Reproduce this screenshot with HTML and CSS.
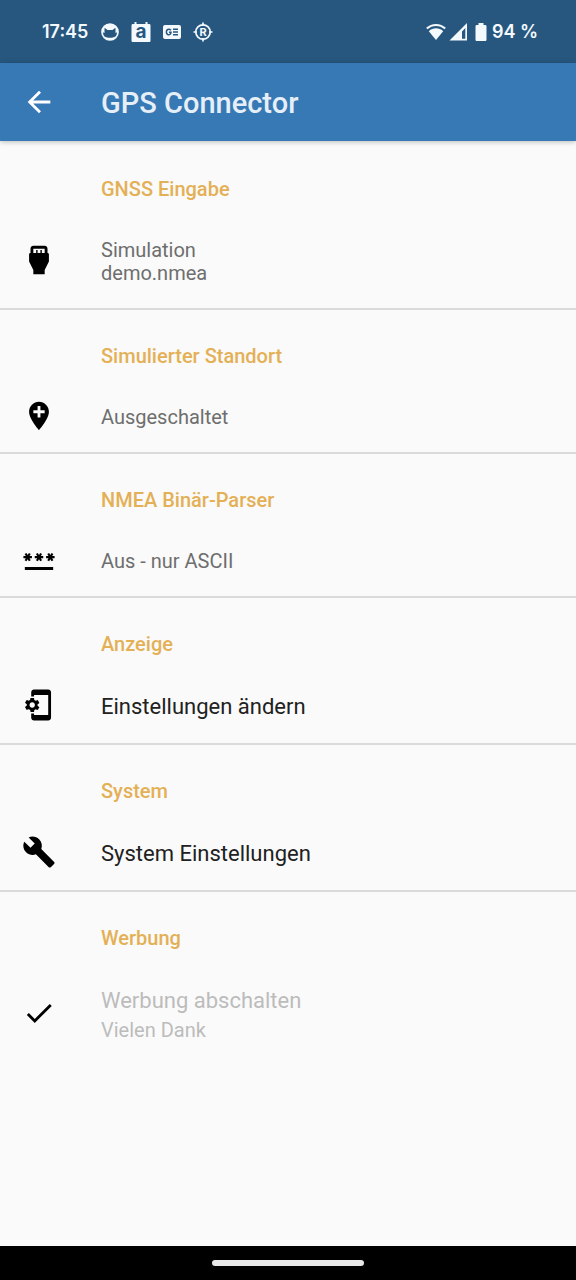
FILE: index.html
```html
<!DOCTYPE html>
<html lang="de">
<head>
    <meta charset="UTF-8">
    <meta name="viewport" content="width=device-width, initial-scale=1.0">
    <title>GPS Connector</title>
    <link rel="stylesheet" href="styles.css">
</head>
<body>
    <div class="status-bar">
        <div class="status-group notifications">
            <span class="clock">17:45</span>
            <svg class="status-icon" viewBox="0 0 20 20" aria-hidden="true">
                <circle cx="10" cy="10" r="8" fill="none" stroke="currentColor" stroke-width="1.7"/>
                <path fill="currentColor" d="M2.200 10C2.200 5 5.500 2 10 2s7.800 3 7.800 8l-2.300 1V5.800l-3 2.200h-5l-3-2.200V11z"/>
                <path fill="currentColor" d="M4.500 14.500c3 1.800 8 1.800 11 0L13 18H7z"/>
            </svg>
            <svg class="status-icon" viewBox="0 0 20 20" aria-hidden="true">
                <path fill="currentColor" d="M3.500 0h2v2h9V0h2v2H18c1 0 1.500.5 1.500 1.500v15c0 1-.5 1.500-1.500 1.500H2c-1 0-1.500-.5-1.500-1.500v-15C.5 2.500 1 2 2 2h1.500z"/>
                <text class="badge-letter" x="10" y="16">a</text>
            </svg>
            <svg class="status-icon" viewBox="0 0 20 20" aria-hidden="true">
                <rect x="1" y="3" width="18" height="14" rx="2" fill="currentColor"/>
                <path class="cutout" d="M9 8.300C8 7.200 6.800 6.900 5.700 7.500c-1.800 1-1.800 4 0 5C7.300 13.300 9 12.300 9 10.300H7M11 7.300h5M11 10h5M11 12.700h5"/>
            </svg>
            <svg class="status-icon" viewBox="0 0 20 20" aria-hidden="true">
                <circle cx="10" cy="10" r="7.200" fill="none" stroke="currentColor" stroke-width="1.700"/>
                <path d="M10 .5V4M10 16v3.500M.5 10H4M16 10h3.500" stroke="currentColor" stroke-width="1.700"/>
                <text class="ring-letter" x="10" y="14">R</text>
            </svg>
        </div>
        <div class="status-group">
            <svg class="status-icon" viewBox="0 0 20 20" aria-hidden="true">
                <path d="M.8 6.500C6 1.700 14 1.700 19.200 6.500" fill="none" stroke="currentColor" stroke-width="2"/>
                <path fill="currentColor" d="M2.800 9.200c4.200-3.800 10.200-3.800 14.400 0L10 18z"/>
            </svg>
            <svg class="status-icon" viewBox="0 0 20 20" aria-hidden="true">
                <path fill="currentColor" fill-rule="evenodd" d="M19 1v17.500H1.500zM17.300 6l-3.300 3.500v7.300h3.300z"/>
            </svg>
            <svg class="battery" viewBox="0 0 12 20" aria-hidden="true">
                <path fill="currentColor" d="M3.500 1h5v2H10c1 0 1.500.5 1.500 1.500v13c0 1-.5 1.500-1.500 1.500H2c-1 0-1.500-.5-1.500-1.500v-13C.5 3.500 1 3 2 3h1.500z"/>
            </svg>
            <span class="charge">94 %</span>
        </div>
    </div>

    <header class="toolbar">
        <button class="back-button" type="button" aria-label="Zurück">
            <svg class="icon" viewBox="0 0 24 24"><path d="M20 11H7.830l5.590-5.590L12 4l-8 8 8 8 1.410-1.410L7.830 13H20v-2z"/></svg>
        </button>
        <h1>GPS Connector</h1>
    </header>

    <main class="settings">
        <section class="category">
            <h2>GNSS Eingabe</h2>
            <button class="preference" type="button">
                <svg class="icon" viewBox="0 0 24 24"><path d="M18 7V4c0-1.100-.9-2-2-2H8c-1.100 0-2 .9-2 2v3c-.6 0-1 .4-1 1v5l3 6v3h8v-3l3-6V8c0-.6-.4-1-1-1zM8 4h8v3h-2V5h-1v2h-2V5h-1v2H8V4z"/></svg>
                <span class="preference-text">
                    <span class="summary">Simulation<br>demo.nmea</span>
                </span>
            </button>
        </section>

        <section class="category">
            <h2>Simulierter Standort</h2>
            <button class="preference" type="button">
                <svg class="icon" viewBox="0 0 24 24"><path d="M12 2C8.140 2 5 5.140 5 9c0 5.250 7 13 7 13s7-7.750 7-13c0-3.860-3.140-7-7-7zm4 8h-3v3h-2v-3H8V8h3V5h2v3h3v2z"/></svg>
                <span class="preference-text">
                    <span class="summary">Ausgeschaltet</span>
                </span>
            </button>
        </section>

        <section class="category">
            <h2>NMEA Binär-Parser</h2>
            <button class="preference" type="button">
                <svg class="icon" viewBox="0 0 24 24"><path d="M2 17h20v2H2v-2zm1.150-4.050L4 11.470l.85 1.480 1.300-.75-.85-1.480H7v-1.500H5.300l.85-1.470L4.850 7 4 8.470 3.150 7l-1.300.75.85 1.470H1v1.500h1.700l-.85 1.480 1.300.75zm6.700-.75l1.300.75.85-1.480.85 1.480 1.300-.75-.85-1.480H15v-1.500h-1.700l.85-1.470-1.300-.75L12 8.470 11.150 7l-1.300.75.85 1.470H9v1.500h1.700l-.85 1.480zM23 9.220h-1.700l.85-1.470-1.300-.75L20 8.470 19.150 7l-1.300.75.85 1.470H17v1.500h1.700l-.85 1.480 1.300.75.850-1.480.85 1.480 1.300-.75-.85-1.480H23v-1.500z"/></svg>
                <span class="preference-text">
                    <span class="summary">Aus - nur ASCII</span>
                </span>
            </button>
        </section>

        <section class="category">
            <h2>Anzeige</h2>
            <button class="preference" type="button">
                <svg class="icon" viewBox="0 0 24 24"><path d="M11 12.500v-1l1.100-.8c.1-.1.1-.2.1-.3l-1-1.700c-.1-.1-.2-.2-.3-.1l-1.300.4c-.3-.2-.6-.4-.9-.5l-.2-1.300c0-.1-.1-.2-.3-.2h-2c-.1 0-.2.1-.3.2l-.2 1.300c-.3.1-.6.3-.9.5l-1.300-.5c-.1 0-.2 0-.3.1l-1 1.700c-.1.1 0 .2.1.3l1.100.8v1l-1.100.8c-.1.200-.1.300-.1.400l1 1.700c.1.100.2.200.3.100l1.400-.4c.3.200.6.400.9.500l.2 1.300c0 .1.100.2.200.2h2c.1 0 .2-.1.300-.2l.2-1.300c.3-.1.600-.3.900-.5l1.300.5c.1 0 .2 0 .3-.1l1-1.700c.1-.1 0-.2-.1-.3L11 12.500zM7.200 13.900c-1.100 0-1.900-.9-1.900-1.900s.8-1.900 1.900-1.900 1.900.9 1.900 1.900-.8 1.900-1.900 1.900zM18.500 1H8.500c-1.100 0-2 .9-2 2v3h2V5H18.500v14H8.500v-1h-2v3c0 1.100.9 2 2 2H18.500c1.100 0 2-.9 2-2V3c0-1.100-.9-2-2-2z"/></svg>
                <span class="preference-text">
                    <span class="title">Einstellungen ändern</span>
                </span>
            </button>
        </section>

        <section class="category">
            <h2>System</h2>
            <button class="preference" type="button">
                <svg class="icon" viewBox="0 0 24 24"><path d="M22.700 19l-9.100-9.100c.9-2.300.4-5-1.500-6.900-2-2-5-2.400-7.400-1.300L9 6 6 9 1.600 4.700C.4 7.100.9 10.100 2.900 12.100c1.900 1.900 4.600 2.400 6.900 1.500l9.100 9.100c.4.400 1 .4 1.400 0l2.300-2.300c.5-.4.5-1.100.1-1.400z"/></svg>
                <span class="preference-text">
                    <span class="title">System Einstellungen</span>
                </span>
            </button>
        </section>

        <section class="category">
            <h2>Werbung</h2>
            <button class="preference" type="button" disabled>
                <svg class="icon" viewBox="0 0 24 24"><path d="M9 16.170L4.830 12l-1.420 1.410L9 19 21 7l-1.410-1.410z"/></svg>
                <span class="preference-text">
                    <span class="title">Werbung abschalten</span>
                    <span class="summary">Vielen Dank</span>
                </span>
            </button>
        </section>
    </main>

    <footer class="nav-bar">
        <div class="nav-handle"></div>
    </footer>
</body>
</html>
```
FILE: styles.css
```css
:root {
    --status-color: #27577f;
    --primary-color: #3779b5;
    --accent-color: #e4b056;
    --background-color: #fafafa;
    --text-color: #212121;
    --summary-color: #6e6e6e;
    --disabled-color: #bcbcbc;
    --divider-color: #dadada;
}

* {
    margin: 0;
    padding: 0;
    box-sizing: border-box;
}

body {
    display: flex;
    flex-direction: column;
    min-height: 100vh;
    background: var(--background-color);
    color: var(--text-color);
    font-family: Roboto, sans-serif;
}

.status-bar {
    display: flex;
    justify-content: space-between;
    align-items: center;
    height: 63px;
    padding: 0 38px 0 42px;
    background: var(--status-color);
    color: #f3f9fd;
    font-family: Inter, sans-serif;
    font-size: 18px;
    font-weight: 600;
}

.status-group {
    display: flex;
    align-items: center;
    gap: 2px;
}

.notifications {
    gap: 11px;
}

.clock {
    padding-right: 1px;
}

.status-icon {
    width: 20px;
    height: 20px;
}

.battery {
    width: 12px;
    height: 20px;
    margin: 0 3px 0 5px;
}

.badge-letter,
.ring-letter {
    font-weight: 700;
    text-anchor: middle;
}

.badge-letter {
    fill: var(--status-color);
    font-size: 19px;
}

.ring-letter {
    fill: currentColor;
    font-size: 11px;
}

.cutout {
    fill: none;
    stroke: var(--status-color);
    stroke-width: 1.5;
}

.toolbar {
    display: flex;
    align-items: center;
    height: 78px;
    background: var(--primary-color);
    color: #e6eff7;
    box-shadow: 0 1px 5px rgba(0, 0, 0, 0.25);
}

.back-button {
    width: 101px;
    height: 100%;
    padding-left: 22px;
    border: none;
    background: none;
    color: white;
    text-align: left;
    cursor: pointer;
}

.icon {
    display: block;
    flex-shrink: 0;
    width: 34px;
    height: 34px;
    fill: currentColor;
}

h1 {
    padding-top: 2px;
    font-size: 29px;
    font-weight: 500;
}

.settings {
    flex: 1;
    padding-top: 2px;
}

.category {
    border-bottom: 2px solid var(--divider-color);
}

.category:last-child {
    border-bottom: none;
}

h2 {
    padding: 34px 22px 11px 101px;
    color: var(--accent-color);
    font-size: 20px;
    font-weight: 500;
    line-height: 24px;
}

.preference {
    display: flex;
    align-items: center;
    gap: 45px;
    width: 100%;
    padding: 0 22px;
    border: none;
    background: none;
    color: black;
    font-family: inherit;
    text-align: left;
    cursor: pointer;
}

.preference-text {
    display: flex;
    flex-direction: column;
    gap: 5px;
    padding: 27px 0 23px;
}

.title {
    color: var(--text-color);
    font-size: 22px;
    line-height: 26px;
}

.summary {
    color: var(--summary-color);
    font-size: 20px;
    line-height: 23px;
}

.preference:disabled {
    cursor: default;
}

.preference:disabled .title,
.preference:disabled .summary {
    color: var(--disabled-color);
}

.nav-bar {
    display: flex;
    justify-content: center;
    align-items: center;
    height: 34px;
    background: black;
}

.nav-handle {
    width: 152px;
    height: 6px;
    border-radius: 3px;
    background: #e8e8e8;
}
```
